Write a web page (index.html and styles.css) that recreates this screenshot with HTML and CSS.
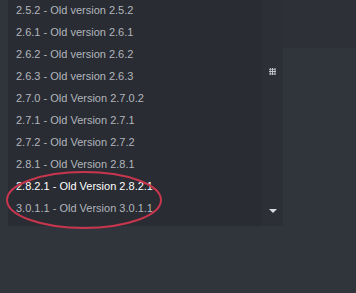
FILE: index.html
```html
<!DOCTYPE html>
<html>

<head>
    <title>Versions</title>
    <meta name="viewport" content="width=device-width, initial-scale=1.0">
    <link rel="stylesheet" href="styles.css">
</head>

<body>
    <div class="page">
        <div class="dropdown">
            <ul class="options">
                <li>2.5.2 - Old version 2.5.2</li>
                <li>2.6.1 - Old version 2.6.1</li>
                <li>2.6.2 - Old version 2.6.2</li>
                <li>2.6.3 - Old version 2.6.3</li>
                <li>2.7.0 - Old Version 2.7.0.2</li>
                <li>2.7.1 - Old Version 2.7.1</li>
                <li>2.7.2 - Old Version 2.7.2</li>
                <li>2.8.1 - Old Version 2.8.1</li>
                <li class="selected">2.8.2.1 - Old Version 2.8.2.1</li>
                <li>3.0.1.1 - Old Version 3.0.1.1</li>
            </ul>
            <div class="scrollbar">
                <span class="grip"></span>
                <span class="arrow"></span>
            </div>
        </div>
        <div class="side"></div>

        <svg class="circle" width="170" height="64" viewBox="0 0 170 64">
            <ellipse cx="80" cy="30" rx="77" ry="28" fill="none" stroke="#c8364e" stroke-width="2" />
        </svg>
    </div>
</body>

</html>
```

FILE: styles.css
```css
body {
    margin: 0;
    padding: 0;
    background-color: #30343b;
    font-family: Arial, "Liberation Sans", sans-serif;
}

.page {
    position: relative;
    display: flex;
    width: 356px;
    height: 293px;
}

.side {
    flex: 1;
    height: 48px;
    background-color: #2d3137;
}

.dropdown {
    display: flex;
    margin-left: 8px;
    width: 275px;
    height: 226px;
    background-color: #292c33;
}

.options {
    list-style: none;
    margin: 0;
    padding: 0 0 0 8px;
    flex: 1;
}

.options li {
    height: 22px;
    line-height: 21px;
    font-size: 11px;
    color: #b2b6bd;
}

.options li.selected {
    color: #ffffff;
}

.scrollbar {
    display: flex;
    flex-direction: column;
    align-items: center;
    justify-content: space-between;
    width: 21px;
    background-color: #2c2f36;
    border-left: 1px solid #2a2d33;
}

.grip {
    margin-top: 68px;
    width: 7px;
    height: 7px;
    background-image: radial-gradient(circle, #d0d3d8 0.8px, transparent 1.1px);
    background-size: 2.4px 2.4px;
}

.arrow {
    margin-bottom: 13px;
    width: 0;
    height: 0;
    border-left: 4px solid transparent;
    border-right: 4px solid transparent;
    border-top: 4px solid #d8dade;
}

.circle {
    position: absolute;
    left: 4px;
    top: 170px;
}
```
